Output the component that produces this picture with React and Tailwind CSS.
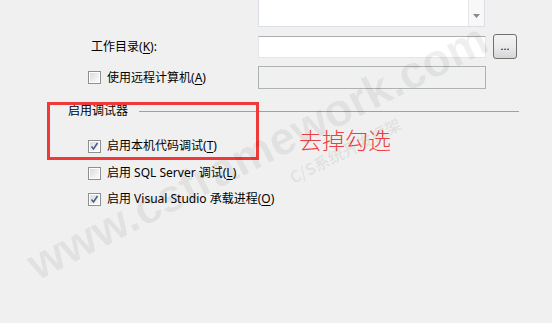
import React from 'react';

const ui = { fontFamily: '"Noto Sans", "Noto Sans CJK SC", sans-serif' };

const Check = ({ checked }) => (
  <span className="w-[13px] h-[13px] border border-[#8e8f8f] bg-white p-px flex shrink-0">
    <span className="flex-1 bg-gradient-to-br from-[#dcdcdc] to-[#fbfbfb] flex items-center justify-center">
      {checked && (
        <svg width="9" height="9" viewBox="0 0 9 9">
          <path d="M1.5 4.5 L3.5 7 L7.5 1" fill="none" stroke="#4b5d90" strokeWidth="1.6" />
        </svg>
      )}
    </span>
  </span>
);

const Key = ({ k }) => (
  <>
    (<span className="underline underline-offset-2">{k}</span>)
  </>
);

const CheckRow = ({ checked, children, className = '' }) => (
  <div className={`flex items-center h-[16px] pl-[88px] gap-[6px] ${className}`}>
    <Check checked={checked} />
    <span className="text-[12px] leading-none text-black whitespace-nowrap">{children}</span>
  </div>
);

const App = () => {
  return (
    <div className="relative w-[552px] h-[323px] bg-[#f0f0f0] overflow-hidden" style={ui}>
      {/* top multi-line textbox, clipped by the window */}
      <div className="ml-[258px] w-[227px] h-[27px] bg-white border border-t-0 border-[#dadfe6] flex justify-end">
        <div className="w-[16px] bg-[#f8f8f8] border-l border-[#e6e6e6] flex items-end justify-center pb-[8px]">
          <svg width="7" height="4" viewBox="0 0 7 4">
            <path d="M0 0 H7 L3.5 4 Z" fill="#8a8a8a" />
          </svg>
        </div>
      </div>

      {/* working directory */}
      <div className="flex items-center h-[25px] mt-[7px]">
        <div className="w-[258px] pl-[91px] text-[12px] leading-none text-black whitespace-nowrap">
          工作目录<Key k="K" />:
        </div>
        <div className="w-[228px] h-[22px] bg-white border border-[#e2e6ec] border-t-[#abadb3]" />
        <button className="ml-[7px] w-[24px] h-[25px] rounded-[3px] border border-[#707070] bg-gradient-to-b from-[#f2f2f2] via-[#ebebeb] to-[#d6d6d6] flex items-center justify-center text-[11px] leading-none text-black pb-[3px]">
          ...
        </button>
      </div>

      {/* remote machine */}
      <div className="flex items-center h-[23px] mt-[7px]">
        <div className="w-[258px] flex items-center pl-[88px] gap-[6px]">
          <Check checked={false} />
          <span className="text-[12px] leading-none text-black whitespace-nowrap">
            使用远程计算机<Key k="A" />
          </span>
        </div>
        <div className="w-[228px] h-[23px] bg-[#f0f0f0] border border-[#adb2b5]" />
      </div>

      {/* debuggers group */}
      <div className="flex items-center mt-[14px] h-[16px] pl-[68px]">
        <span className="text-[12px] leading-none text-black whitespace-nowrap">启用调试器</span>
        <div className="ml-[11px] w-[380px] h-px bg-[#a0a0a0]" />
      </div>

      <CheckRow checked className="mt-[19px]">
        启用本机代码调试<Key k="T" />
      </CheckRow>
      <CheckRow checked={false} className="mt-[11px]">
        启用 SQL Server 调试<Key k="L" />
      </CheckRow>
      <CheckRow checked className="mt-[10px]">
        启用 Visual Studio 承载进程<Key k="O" />
      </CheckRow>

      {/* annotation */}
      <div className="absolute left-[47px] top-[102px] w-[212px] h-[58px] border-[3px] border-[#f03a3a]" />
      <div
        className="absolute left-[299px] top-[128px] text-[23px] leading-none text-[#ee4040] font-light whitespace-nowrap"
        style={{ fontFamily: '"Noto Sans CJK SC", sans-serif' }}
      >
        去掉勾选
      </div>

      {/* watermark */}
      <div
        className="absolute left-[257px] top-[151px] -translate-x-1/2 -translate-y-1/2 -rotate-[27deg] text-[46px] font-bold leading-none text-black/[0.065] whitespace-nowrap pointer-events-none"
        style={{ fontFamily: '"Liberation Sans", Arial, sans-serif' }}
      >
        www.csframework.com
      </div>
      <div
        className="absolute left-[345px] top-[150px] -translate-x-1/2 -translate-y-1/2 -rotate-[27deg] text-[16px] font-bold leading-none text-black/[0.07] whitespace-nowrap pointer-events-none"
        style={{ fontFamily: '"Noto Sans CJK SC", sans-serif' }}
      >
        C/S系统开发框架
      </div>
    </div>
  );
};

export default App;
